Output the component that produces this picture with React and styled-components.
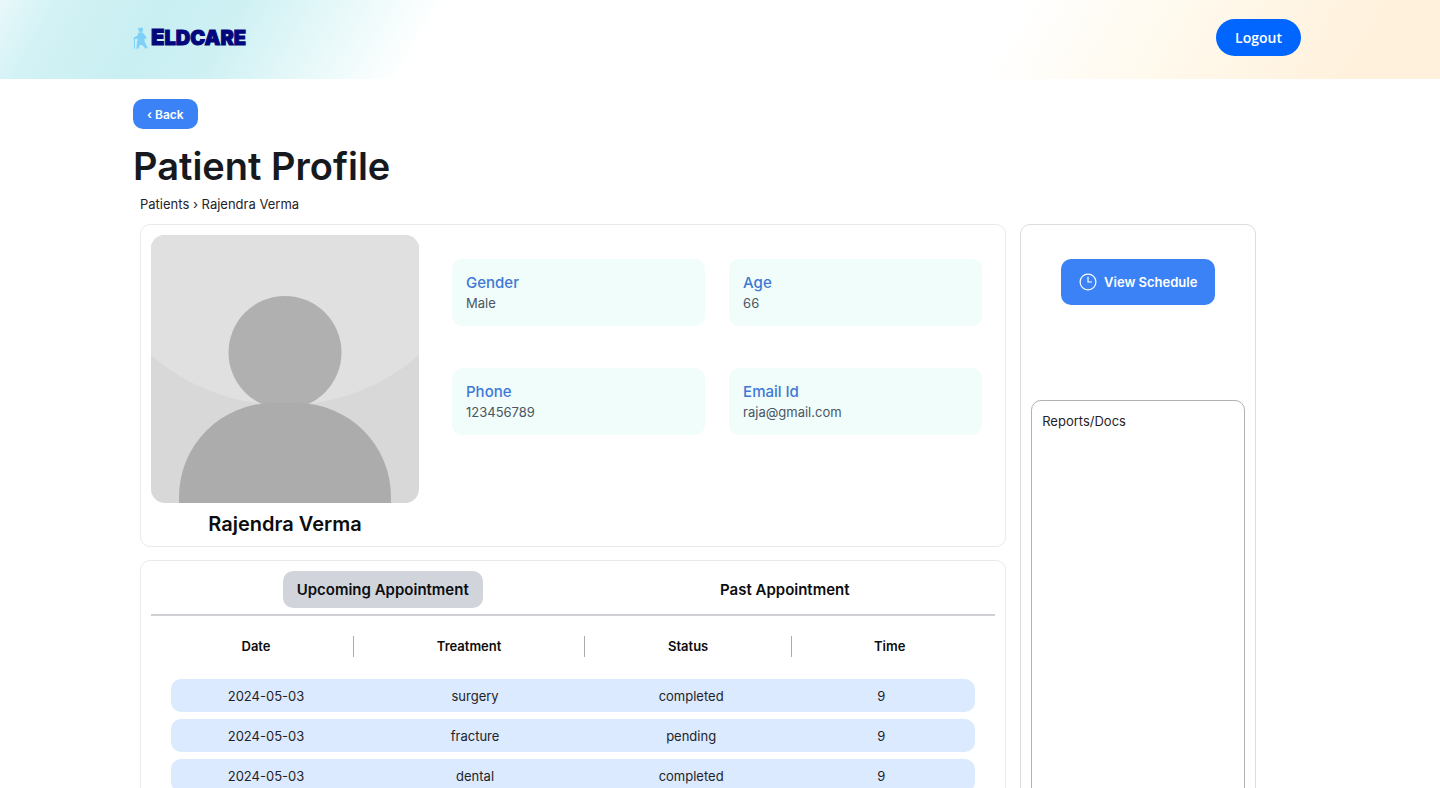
import { useState } from "react";
import styled, { createGlobalStyle } from "styled-components";

const GlobalStyle = createGlobalStyle`
  * {
    box-sizing: border-box;
  }

  body {
    margin: 0;

    font-family: Inter, "Liberation Sans", sans-serif;
    font-size: 13px;
    line-height: 20px;

    color: #1f2328;
    background-color: #ffffff;
  }

  h1, h2, h3, p, dl, dd {
    margin: 0;
  }

  button {
    border: none;

    font-family: inherit;

    cursor: pointer;
  }
`;

const Header = styled.header`
  display: flex;

  align-items: center;
  justify-content: space-between;

  height: 79px;

  padding: 0 139px 4px 133px;

  background: linear-gradient(
    120deg,
    #e8f8fa 0%,
    #d3f2f5 4%,
    #c9eff2 11%,
    #cdf0f3 16%,
    #e6f8f9 23%,
    #ffffff 30%,
    #ffffff 69%,
    #fff9ec 81%,
    #fff1dc 94%
  );
`;

const Logo = styled.a`
  display: flex;

  align-items: center;

  gap: 3px;

  font-size: 20px;
  font-weight: 900;

  text-decoration: none;

  color: #04077c;

  span {
    display: block;

    -webkit-text-stroke: 1px #04077c;
  }

  span::first-letter {
    font-size: 22px;
  }
`;

const LogoutButton = styled.button`
  height: 37px;

  padding: 0 19px;

  border-radius: 20px;

  font-family: "Open Sans", sans-serif;
  font-size: 14px;
  font-weight: 600;

  color: #ffffff;
  background-color: #0066ff;
`;

const Page = styled.main`
  padding: 20px 132px 20px 133px;
`;

const BackButton = styled.button`
  height: 30px;

  padding: 0 14px;

  border-radius: 10px;

  font-size: 12px;
  font-weight: 600;

  color: #ffffff;
  background-color: #3b82f6;
`;

const Title = styled.h1`
  margin-top: 12px;

  font-size: 38px;
  font-weight: 600;
  line-height: 50px;

  color: #16191d;
`;

const Breadcrumb = styled.nav`
  margin: 3px 0 10px 7px;

  a {
    text-decoration: none;

    color: inherit;
  }
`;

const Content = styled.div`
  display: grid;
  grid-template-columns: 866fr 236fr;

  width: 95%;

  gap: 14px;

  margin-left: 7px;
`;

const MainColumn = styled.div`
  display: flex;
  flex-direction: column;

  gap: 13px;
`;

const Card = styled.section`
  padding: 10px;

  border: 1px solid ${(props) => props.$border || "#e9eaec"};
  border-radius: 10px;
`;

const ProfileCard = styled(Card)`
  display: flex;

  gap: 33px;
`;

const Portrait = styled.figure`
  width: 268px;

  margin: 0;

  svg {
    display: block;

    width: 100%;

    border-radius: 14px;
  }

  figcaption {
    padding-top: 9px;

    font-size: 20px;
    font-weight: 600;
    line-height: 24px;
    text-align: center;

    color: #0c0d0f;
  }
`;

const InfoGrid = styled.dl`
  display: grid;
  grid-template-columns: 1fr 1fr;

  flex: 1;
  align-content: start;

  gap: 42px 24px;

  padding: 24px 13px 0 0;
`;

const InfoItem = styled.div`
  height: 67px;

  padding: 14px;

  border-radius: 10px;

  background-color: #f0fdfa;

  dt {
    font-size: 15px;
    font-weight: 500;

    color: #3e78d6;
  }

  dd {
    color: #4b5563;
  }
`;

const Tabs = styled.div`
  display: flex;

  justify-content: space-around;

  padding: 0 20px 6px;

  border-bottom: 2px solid #cfd0d3;
`;

const Tab = styled.button`
  height: 37px;

  padding: 0 14px;

  border-radius: 10px;

  font-size: 15px;
  font-weight: 600;

  color: #0c0d0f;
  background-color: ${(props) => (props.$active ? "#d1d5db" : "transparent")};
`;

const AppointmentTable = styled.table`
  display: block;

  thead,
  tbody {
    display: block;
  }

  tbody {
    padding: 0 20px;
  }
`;

const HeadRow = styled.tr`
  display: grid;
  grid-template-columns: 194fr 231fr 207fr 196fr;

  margin: 20px 8px 22px;

  th {
    padding: 0;

    font-weight: 600;
    line-height: 21px;

    color: #0c0d0f;
  }

  th + th {
    border-left: 1px solid #a9abaf;
  }
`;

const BodyRow = styled.tr`
  display: grid;
  grid-template-columns: 190fr 228fr 204fr 176fr;

  align-items: center;

  height: 33px;

  margin-bottom: 7px;
  padding-right: 6px;

  border-radius: 10px;

  text-align: center;

  background-color: #dbeafe;

  td {
    padding: 0;
  }
`;

const SideCard = styled(Card)`
  display: flex;
  flex-direction: column;

  align-items: center;

  gap: 95px;

  padding-top: 34px;
`;

const ScheduleButton = styled.button`
  display: flex;

  align-items: center;

  height: 46px;

  gap: 7px;

  padding: 0 18px;

  border-radius: 10px;

  font-size: 13px;
  font-weight: 600;

  color: #ffffff;
  background-color: #3b82f6;
`;

const Reports = styled.div`
  flex: 1;

  width: 100%;

  padding: 10px;

  border: 1px solid #b0b2b6;
  border-radius: 10px;

  h3 {
    font-size: 13px;
    font-weight: 400;
  }
`;

const details = [
  { label: "Gender", value: "Male" },
  { label: "Age", value: "66" },
  { label: "Phone", value: "123456789" },
  { label: "Email Id", value: "raja@gmail.com" },
];

const columns = ["Date", "Treatment", "Status", "Time"];

const appointments = [
  { date: "2024-05-03", treatment: "surgery", status: "completed", time: 9 },
  { date: "2024-05-03", treatment: "fracture", status: "pending", time: 9 },
  { date: "2024-05-03", treatment: "dental", status: "completed", time: 9 },
];

function WalkerIcon() {
  return (
    <svg width="15" height="22" viewBox="0 0 15 22" aria-hidden="true">
      <g fill="#7fd0f7">
        <path d="M5 1.2 9.6.4 10 2.2 9.6 4.4 7.6 5.2 5.8 4.2 5.6 2.4 4.6 2.2z" />
        <path d="M6 5.2 9.6 5.4 11.4 7.6 13.6 10.6 12.8 12.2 11.2 11.2 11.8 15 14.6 20.8 12.6 21.8 9.2 18 6.6 18.2 5.4 21.8 3.4 21.6 4 15.6 4.8 11.4 1.4 12 .6 10.6 4 9z" />
      </g>
      <path d="M1.4 11V21.8" stroke="#7fd0f7" strokeWidth="1" />
    </svg>
  );
}

function ClockIcon() {
  return (
    <svg
      width="18"
      height="18"
      viewBox="0 0 18 18"
      fill="none"
      stroke="#ffffff"
      strokeWidth="1.2"
      aria-hidden="true"
    >
      <circle cx="9" cy="9" r="7.9" />
      <path d="M9 3.8v5.2h4" />
    </svg>
  );
}

function Avatar() {
  return (
    <svg viewBox="0 0 268 268" role="img" aria-label="Rajendra Verma">
      <rect width="268" height="268" fill="#d8d8d8" />
      <circle cx="134" cy="-35" r="205" fill="#e0e0e0" />
      <circle cx="134" cy="117.5" r="56.5" fill="#b0b0b0" />
      <path
        d="M28 268V262A94 94 0 0 1 122 168H146A94 94 0 0 1 240 262V268Z"
        fill="#acacac"
      />
    </svg>
  );
}

function App() {
  const [tab, setTab] = useState("upcoming");

  return (
    <>
      <GlobalStyle />
      <Header>
        <Logo href="#">
          <WalkerIcon />
          <span>ELDCARE</span>
        </Logo>
        <LogoutButton>Logout</LogoutButton>
      </Header>
      <Page>
        <BackButton>‹ Back</BackButton>
        <Title>Patient Profile</Title>
        <Breadcrumb>
          <a href="#">Patients</a> › Rajendra Verma
        </Breadcrumb>
        <Content>
          <MainColumn>
            <ProfileCard>
              <Portrait>
                <Avatar />
                <figcaption>Rajendra Verma</figcaption>
              </Portrait>
              <InfoGrid>
                {details.map((item) => (
                  <InfoItem key={item.label}>
                    <dt>{item.label}</dt>
                    <dd>{item.value}</dd>
                  </InfoItem>
                ))}
              </InfoGrid>
            </ProfileCard>
            <Card>
              <Tabs>
                <Tab
                  $active={tab === "upcoming"}
                  onClick={() => setTab("upcoming")}
                >
                  Upcoming Appointment
                </Tab>
                <Tab $active={tab === "past"} onClick={() => setTab("past")}>
                  Past Appointment
                </Tab>
              </Tabs>
              <AppointmentTable>
                <thead>
                  <HeadRow>
                    {columns.map((column) => (
                      <th key={column}>{column}</th>
                    ))}
                  </HeadRow>
                </thead>
                <tbody>
                  {appointments.map((item, index) => (
                    <BodyRow key={index}>
                      <td>{item.date}</td>
                      <td>{item.treatment}</td>
                      <td>{item.status}</td>
                      <td>{item.time}</td>
                    </BodyRow>
                  ))}
                </tbody>
              </AppointmentTable>
            </Card>
          </MainColumn>
          <SideCard $border="#dcdde0">
            <ScheduleButton>
              <ClockIcon />
              View Schedule
            </ScheduleButton>
            <Reports>
              <h3>Reports/Docs</h3>
            </Reports>
          </SideCard>
        </Content>
      </Page>
    </>
  );
}

export default App;
